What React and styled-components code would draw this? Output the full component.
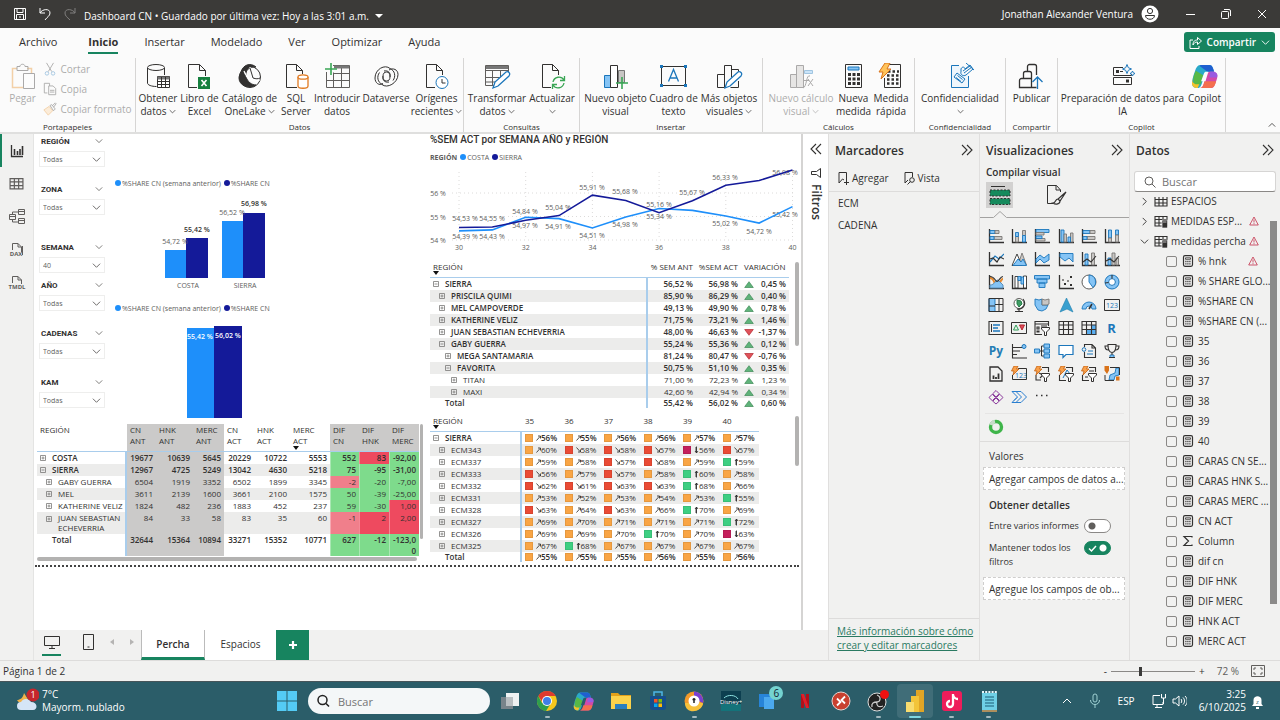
import React from 'react';
import styled, { createGlobalStyle, css } from 'styled-components';

const green = '#17845f';
const ink = '#323130';
const sky = '#1b76bb';
const pale = '#85c4f5';
const grey = '#c8c6c4';

const GlobalStyle = createGlobalStyle`
  * {
    box-sizing: border-box;
  }

  body {
    margin: 0;
    overflow: hidden;
    font-family: 'Open Sans', 'Noto Sans', sans-serif;
    font-size: 10px;
    color: ${ink};
  }

  button, input, select {
    font: inherit;
    color: inherit;
    margin: 0;
    padding: 0;
    border: 0;
    background: none;
  }

  h2, h3, p, ul {
    margin: 0;
    padding: 0;
    font-size: inherit;
    font-weight: 600;
  }

  svg {
    display: block;
    flex: none;
  }
`;

const Svg = ({ w = 16, h = w, vw = w, vh = h, s = ink, children, ...rest }) => (
  <svg width={w} height={h} viewBox={`0 0 ${vw} ${vh}`} fill="none" stroke={s} aria-hidden="true" {...rest}>
    {children}
  </svg>
);

const Chevron = ({ w = 8, dir = 'down', s = ink }) => {
  const d = {
    down: 'M1 3l4 4 4-4',
    up: 'M1 7l4-4 4 4',
    right: 'M3 1l4 4-4 4',
  };
  return (
    <Svg w={w} vw={10} vh={10} s={s}>
      <path d={d[dir]} />
    </Svg>
  );
};

const Double = ({ left }) => (
  <Svg w={12} s={ink}>
    <path d={left ? 'M6 1L1 6l5 5M11 1L6 6l5 5' : 'M1 1l5 5-5 5M6 1l5 5-5 5'} strokeWidth="1.1" />
  </Svg>
);

/* ---------- shell ---------- */

const Shell = styled.div`
  display: flex;
  flex-direction: column;
  height: 100vh;
  background: #f1f1f0;
`;

const TitleBar = styled.header`
  display: flex;
  align-items: center;
  height: 28px;
  padding: 0 12px 0 13px;
  background: #3b3a38;
  color: #fff;
`;

const TitleText = styled.span`
  display: flex;
  align-items: center;
  gap: 6px;
  margin-left: 7px;
  padding-top: 4px;
`;

const QuickTools = styled.div`
  display: flex;
  gap: 11px;
`;

const UserBox = styled.div`
  display: flex;
  align-items: center;
  gap: 8px;
  margin-left: auto;
`;

const WindowTools = styled.div`
  display: flex;
  gap: 24px;
  margin-left: 25px;
`;

const MenuBar = styled.nav`
  display: flex;
  align-items: center;
  height: 28px;
  padding: 0 5px 0 19px;
  gap: 26px;
  background: #fbfbfb;
  font-size: 11px;
`;

const MenuItem = styled.button`
  height: 24px;
  border-bottom: 2px solid ${({ $active }) => ($active ? green : 'transparent')};
  font-weight: ${({ $active }) => ($active ? 700 : 400)};

  &:first-child {
    margin-right: 5px;
  }
`;

const ShareButton = styled.button`
  display: flex;
  align-items: center;
  gap: 5px;
  height: 20px;
  margin-left: auto;
  padding: 0 5px;
  border-radius: 3px;
  background: ${green};
  color: #fff;
  font-size: 10px;
  font-weight: 600;
`;

/* ---------- ribbon ---------- */

const Ribbon = styled.div`
  display: flex;
  height: 78px;
  background: #fbfbfb;
  border-bottom: 2px solid #dfdfde;
`;

const Group = styled.section`
  display: flex;
  flex-direction: column;
  justify-content: space-between;
  width: ${({ $w }) => $w}px;
  margin-top: 2px;
  border-right: 1px solid #d6d5d4;
`;

const GroupItems = styled.div`
  display: flex;
  justify-content: center;
`;

const GroupLabel = styled.span`
  font-size: 8px;
  line-height: 11px;
  text-align: center;
`;

const Tool = styled.button`
  display: flex;
  flex-direction: column;
  align-items: center;
  width: ${({ $w }) => $w}px;
  padding-top: 5px;
  line-height: 13px;
  white-space: nowrap;
  opacity: ${({ disabled }) => (disabled ? 0.4 : 1)};

  > svg {
    margin-bottom: 2px;
  }
`;

const ToolLine = styled.span`
  display: flex;
  align-items: center;
  gap: 2px;
  min-height: 13px;
`;

const ClipList = styled.div`
  display: flex;
  flex-direction: column;
  width: 90px;
  padding-top: 1px;
`;

const ClipButton = styled.button`
  display: flex;
  align-items: center;
  gap: 4px;
  height: 20px;
  opacity: 0.4;
  white-space: nowrap;
`;

const RibbonEnd = styled.div`
  display: flex;
  flex: 1;
  align-items: flex-end;
  justify-content: flex-end;
  padding: 3px 4px;
`;

const toolIcons = {
  obtain: (
    <>
      <path d="M2.500 5v15c0 2 4 3.500 9 3.500M19.500 5v7" />
      <ellipse cx="11" cy="4.500" rx="8.500" ry="3" />
      <path d="M12.500 13.500h12v11h-12z" fill="#fff" />
      <path d="M12.500 15h12" strokeWidth="3" stroke="#777" />
      <path d="M12.500 18.500h12M12.500 21.500h12M16.500 14v10M20.500 14v10" />
    </>
  ),
  excel: (
    <>
      <path d="M11 24.500H2.500v-23h11l6 6V13M13.500 1.500v6h6" />
      <path d="M12 14h12v12H12z" fill="#16803f" stroke="none" />
      <path d="M15.500 17l5 6M20.500 17l-5 6" stroke="#fff" strokeWidth="1.600" />
    </>
  ),
  lake: (
    <>
      <circle cx="14" cy="14" r="10.500" />
      <path d="M5 9C7 2 14-1 20 4c-6-1-11 3-10 9 1 6 6 9 10 9-8 5-17 0-17-7 0-2 1-4 2-6z" fill={ink} />
      <path d="M14 4l2.500 12M8 8c2 6 8 11 16 9M10 13c3 4 7 6 12 6" strokeWidth="1.200" stroke="#fff" />
      <path d="M14 5l3 10M17 15c3 1 5 1 7 0" />
    </>
  ),
  sql: (
    <>
      <path d="M14 24.500H3.500v-23h10l6 6V11M13.500 1.500v6h6" />
      <path d="M15 14v9c0 3 10 3 10 0v-9" fill="#fff" stroke="#e07a22" strokeWidth="1.300" />
      <ellipse cx="20" cy="14" rx="5" ry="2.200" fill="#fff" stroke="#e07a22" strokeWidth="1.300" />
    </>
  ),
  enter: (
    <>
      <path d="M9 2.500h16.500v22h-23V9M2.500 17.500h23M9.500 9.500v15M17.500 4v20.500M9 10.500h16.500" stroke="#605e5c" />
      <path d="M10 4h15" stroke="#777" strokeWidth="3" />
      <path d="M7 0v12M1 6h12" stroke="#3aa655" strokeWidth="1.600" />
    </>
  ),
  dataverse: (
    <>
      <path d="M17 5.500C12 1 2 6 2 15c0 5 4 8 8 5.500" />
      <path d="M9 21.500C14 26 25 20 25 11.500c0-5-5-7-9-4.500" />
      <path d="M17 5.500c5 2 6 8 3 12M9.500 21.500c-5-2-6-8-3-12" />
      <ellipse cx="13.500" cy="13.500" rx="3.500" ry="4.500" />
      <path d="M10 13c-1 4 2 7 6 6M17 14c1-4-2-7-6-6" />
    </>
  ),
  recent: (
    <>
      <path d="M12 24.500H3.500v-23h10l6 6V12M13.500 1.500v6h6" />
      <circle cx="19" cy="19.500" r="6" stroke={sky} fill="#fff" />
      <path d="M19 16v4h3.500" />
    </>
  ),
  transform: (
    <>
      <path d="M12 22.500H1.500v-20h23V9M1.500 7.500h23M1.500 14.500h17M1.500 19h13M8.500 7.500v15M16.500 7.500v8" stroke="#605e5c" />
      <path d="M2 4.500h22" stroke="#777" strokeWidth="3" />
      <path d="M9 25l2-6L22 9c2-1 5 1 3 4L14 23z" fill="#fff" stroke={sky} strokeWidth="1.300" />
    </>
  ),
  refresh: (
    <>
      <path d="M12 24.500H3.500v-23h10l6 6V12M13.500 1.500v6h6" />
      <path d="M14 19a6 6 0 0 1 11-2M25 20a6 6 0 0 1-11 2M25.500 13v4.500H21M13.500 26v-4.500H18" stroke="#3aa655" strokeWidth="1.300" />
    </>
  ),
  visual: (
    <>
      <path d="M2.500 12.500h6v12h-6z" fill={pale} stroke={sky} />
      <path d="M16.500 7.500h6v12h-6z" fill={grey} stroke="#777" />
      <path d="M8.500 2.500h7v22h-7z" fill="#fff" />
      <path d="M20 14v12M14 20h12" stroke="#3aa655" strokeWidth="1.600" />
    </>
  ),
  text: (
    <>
      <path d="M1.500 3.500h24v19h-24z" />
      <path d="M0 2h3v3H0zM24 2h3v3h-3zM0 21h3v3H0zM24 21h3v3h-3z" fill={sky} stroke="none" />
      <path d="M8.500 18.500l5-12 5 12M10 15h7" stroke={sky} strokeWidth="1.300" />
    </>
  ),
  more: (
    <>
      <path d="M8 11.500H1.500v13h7M15.500 6.500h7v5M22.500 18v6.500h-8M8.500 24.500v-22h7v12" />
      <path d="M9 25l2-6L22 9c2-1 5 1 3 4L14 23z" fill="#fff" stroke={sky} strokeWidth="1.300" />
    </>
  ),
  calc: (
    <>
      <path d="M2.500 11.500h6v13h-6zM8.500 2.500h7v22h-7z" fill={grey} />
      <path d="M16.500 7.500h8v3h-8z" fill={pale} stroke={sky} />
      <path d="M22 13c-4-2-3 11-7 12M15 17.500h6M20 16l5 7M25 16l-5 7" />
    </>
  ),
  measure: (
    <>
      <path d="M5.500 1.500h16v23h-16z" />
      <path d="M8 4h11v3H8z" fill={pale} stroke={sky} />
      <path d="M8 11.500h12M8 16h12M8 20.500h12" strokeWidth="3" strokeDasharray="3 1.500" />
    </>
  ),
  quick: (
    <>
      <path d="M11 1.500h11.500v23h-16V15" />
      <path d="M10 8.500h11M9 12.500h12M9 16.500h12M9 20.500h12" strokeWidth="2.500" strokeDasharray="2.500 2" />
      <path d="M7 0h5L9 6h4L3 16l2-7H1z" fill="#ffc35a" stroke="#d9731a" />
    </>
  ),
  label: (
    <>
      <path d="M12 2.500H4.500v22h17V13" stroke={sky} fill="#eef6fc" />
      <path d="M10 10l8 6-3 4-8-6zM10.500 12.500l5 4M9 14.500l5 4" stroke={sky} />
      <path d="M14 6c1-3 4-2 4 0l5-4 3 4-7 6c-3 2-6-1-5-3zM16 8l7-5M17 10l8-6" stroke={sky} />
      <path d="M19 0l8 7" stroke={sky} />
    </>
  ),
  publish: (
    <>
      <path d="M9.500 8V3.500a2 2 0 0 1 2-2h5a2 2 0 0 1 2 2V12M5.500 15V10.500a2 2 0 0 1 2-2h4a2 2 0 0 1 2 2v14M13.500 24.500h-12v-7a2 2 0 0 1 2-2h10M13.500 24.500h5" strokeWidth="1.300" />
      <path d="M19.500 26V14M14.500 19l5-5 5 5" stroke={sky} strokeWidth="1.300" />
    </>
  ),
  prepare: (
    <>
      <path d="M14 4.500H4.500v8h18V11M4.500 14.500h18v7h-18zM14 8.500h-3" />
      <path d="M7 7h3v3H7zM17 16.500h3v3h-3z" fill={ink} stroke="none" />
      <path d="M18 1.500l1.300 3.200 3.200 1.300-3.200 1.300L18 10.500l-1.300-3.200L13.500 6l3.200-1.300zM23.500 8l.8 1.700 1.700.8-1.700.8-.8 1.700-.8-1.700-1.700-.8 1.700-.8z" stroke={sky} />
    </>
  ),
};

const CopilotArt = ({ w = 27, hole = '#fbfbfb' }) => (
  <Svg w={w} vw={28} vh={28} s="none">
    <path d="M10 2h9c2 0 3 1 4 4l1 3h-5c-3 0-4 1-5 4l-3 9c-1 3-2 4-5 4 0 0-5 0-5-5 0-4 3-12 4-15 1-2 2-4 5-4z" fill="#2aa9c9" />
    <path d="M10 2h9c2 0 3 1 4 4l1 3h-7L9 3z" fill="#1f5fd0" />
    <path d="M3 12c-2 5-2 9 1 9h5l-2 5c-4 0-6-2-6-5 0-3 1-6 2-9z" fill="#f3c22b" />
    <path d="M3 13l2-5 8 5-3 9H5c-3 0-3-5-2-9z" fill="#57b947" />
    <path d="M24 9c3 1 4 3 3 7-1 3-2 6-3 8-1 2-3 2-5 2H9c2 0 3-1 4-4l3-10c1-2 2-3 4-3z" fill="#d34aa8" />
    <path d="M14 19h12c-1 5-3 7-6 7H9c3 0 4-3 5-7z" fill="#f46f4e" />
    <path d="M20 9h4c3 1 4 3 3 6h-8z" fill="#9a5ae0" />
    <path d="M15 9h3l-3 10h-4.500l2.500-7c.4-1.500 1-2.500 2-3z" fill={hole} />
  </Svg>
);

const RibbonTool = ({ icon, lines, w, arrow, disabled }) => (
  <Tool $w={w} disabled={disabled}>
    {icon === 'copilot' ? <CopilotArt /> : <Svg w={27}>{toolIcons[icon]}</Svg>}
    {lines.map((line, i) => (
      <ToolLine key={line}>
        {line}
        {arrow && i === lines.length - 1 && <Chevron w={7} />}
      </ToolLine>
    ))}
  </Tool>
);

const groups = [
  {
    label: 'Datos',
    w: 328,
    tools: [
      { icon: 'obtain', lines: ['Obtener', 'datos'], w: 42, arrow: true },
      { icon: 'excel', lines: ['Libro de', 'Excel'], w: 41 },
      { icon: 'lake', lines: ['Catálogo de', 'OneLake'], w: 59, arrow: true },
      { icon: 'sql', lines: ['SQL', 'Server'], w: 34 },
      { icon: 'enter', lines: ['Introducir', 'datos'], w: 48 },
      { icon: 'dataverse', lines: ['Dataverse'], w: 50 },
      { icon: 'recent', lines: ['Orígenes', 'recientes'], w: 51, arrow: true },
    ],
  },
  {
    label: 'Consultas',
    w: 116,
    tools: [
      { icon: 'transform', lines: ['Transformar', 'datos'], w: 61, arrow: true },
      { icon: 'refresh', lines: ['Actualizar', ''], w: 49, arrow: true },
    ],
  },
  {
    label: 'Insertar',
    w: 183,
    tools: [
      { icon: 'visual', lines: ['Nuevo objeto', 'visual'], w: 65 },
      { icon: 'text', lines: ['Cuadro de', 'texto'], w: 51 },
      { icon: 'more', lines: ['Más objetos', 'visuales'], w: 60, arrow: true },
    ],
  },
  {
    label: 'Cálculos',
    w: 152,
    tools: [
      { icon: 'calc', lines: ['Nuevo cálculo', 'visual'], w: 68, arrow: true, disabled: true },
      { icon: 'measure', lines: ['Nueva', 'medida'], w: 37 },
      { icon: 'quick', lines: ['Medida', 'rápida'], w: 38 },
    ],
  },
  {
    label: 'Confidencialidad',
    w: 91,
    tools: [{ icon: 'label', lines: ['Confidencialidad', ''], w: 80, arrow: true }],
  },
  { label: 'Compartir', w: 52, tools: [{ icon: 'publish', lines: ['Publicar'], w: 40 }] },
  {
    label: 'Copilot',
    w: 168,
    tools: [
      { icon: 'prepare', lines: ['Preparación de datos para', 'IA'], w: 126 },
      { icon: 'copilot', lines: ['Copilot'], w: 38 },
    ],
  },
];

const RibbonBar = () => (
  <Ribbon>
    <Group $w={136}>
      <GroupItems>
        <Tool $w={40} disabled>
          <Svg w={27}>
            <path d="M14 24.500H3.500v-19H8M18 5.500h4.500V10" stroke="#e8912c" strokeWidth="1.500" />
            <path d="M8 3.500h3c0-3 5-3 5 0h3v4H8z" />
            <path d="M14.500 10.500h11v15h-11z" fill="#fff" />
          </Svg>
          Pegar
        </Tool>
        <ClipList>
          <ClipButton>
            <Svg w={14} vw={16} vh={16}>
              <path d="M4 1l6 10M12 1L6 11" />
              <circle cx="4.500" cy="13" r="2" stroke={sky} />
              <circle cx="11.500" cy="13" r="2" stroke={sky} />
            </Svg>
            Cortar
          </ClipButton>
          <ClipButton>
            <Svg w={14} vw={16} vh={16}>
              <path d="M5 12.500H1.500v-11h6v3M6.500 4.500h5l3 3v7h-8zM8 9.500h5M8 11.500h5" />
            </Svg>
            Copia
          </ClipButton>
          <ClipButton>
            <Svg w={14} vw={16} vh={16}>
              <path d="M1 9l6-4 4 5-5 5z" fill="#fbd7a8" stroke="#e8912c" />
              <path d="M8 4l2-1 4 5-2 2zM11 4l3-3 1 1-3 4" />
            </Svg>
            Copiar formato
          </ClipButton>
        </ClipList>
      </GroupItems>
      <GroupLabel>Portapapeles</GroupLabel>
    </Group>
    {groups.map((group) => (
      <Group key={group.label} $w={group.w}>
        <GroupItems>
          {group.tools.map((tool) => (
            <RibbonTool key={tool.icon} {...tool} />
          ))}
        </GroupItems>
        <GroupLabel>{group.label}</GroupLabel>
      </Group>
    ))}
    <RibbonEnd>
      <Chevron dir="up" w={8} />
    </RibbonEnd>
  </Ribbon>
);

/* ---------- report ---------- */

const Workspace = styled.main`
  display: flex;
  flex: 1;
  min-height: 0;
`;

const Rail = styled.nav`
  display: flex;
  flex-direction: column;
  width: 34px;
  border-right: 1px solid #e4e4e3;
`;

const RailButton = styled.button`
  display: flex;
  align-items: center;
  justify-content: center;
  height: 33px;
  padding-right: 2px;
  border-left: 2px solid ${({ $active }) => ($active ? green : 'transparent')};
`;

const ReportArea = styled.div`
  display: flex;
  flex-direction: column;
  flex: 1;
  min-width: 0;
`;

const CanvasRow = styled.div`
  display: flex;
  flex: 1;
  min-height: 0;
  background: #fff;
`;

const Canvas = styled.div`
  flex: 1;
  overflow: hidden;
`;

const ReportPage = styled.div`
  display: flex;
  gap: 6px;
  padding: 0 1px 3px 2px;
  margin: 0 2px 0 1px;
  border-bottom: 2px dotted #444;
`;

const LeftSide = styled.div`
  flex: none;
  width: 387px;
`;

const RightSide = styled.div`
  flex: 1;
`;

const UpperLeft = styled.div`
  display: grid;
  grid-template-columns: 68px 1fr;
  gap: 8px;
  height: 290px;
`;

const Slicers = styled.div`
  padding: 1px 0 0 2px;
`;

const Slicer = styled.label`
  display: block;
  margin-bottom: ${({ $gap }) => $gap}px;
`;

const SlicerTitle = styled.span`
  display: flex;
  align-items: center;
  justify-content: space-between;
  height: 12px;
  padding: 0 2px;
  font-family: Roboto, sans-serif;
  font-size: 8px;
  font-weight: 700;
`;

const SlicerField = styled.span`
  display: grid;
  align-items: center;
  height: 16px;
  margin-top: 4px;
  border: 1px solid #eeeeed;

  select {
    grid-area: 1 / 1;
    width: 100%;
    padding-left: 3px;
    appearance: none;
    font-size: 7px;
    color: #605e5c;
  }

  svg {
    grid-area: 1 / 1;
    justify-self: end;
    margin-right: 3px;
    pointer-events: none;
  }
`;

const Legend = styled.div`
  display: flex;
  align-items: center;
  gap: 1px;
  height: 12px;
  font-size: 7px;
  color: #605e5c;
  white-space: nowrap;
`;

const Dot = styled.i`
  width: 6px;
  height: 6px;
  margin-left: 2px;
  border-radius: 50%;
  background: ${({ $color }) => $color};
`;

const ChartBlock = styled.div`
  padding-top: ${({ $top }) => $top}px;
`;

const ChartTitle = styled.h3`
  height: 17px;
  font-family: Roboto, sans-serif;
  font-size: 10px;
  font-weight: 500;
  line-height: 11px;
`;

const costaBlue = '#1e8ffa';
const sierraBlue = '#141a99';

const slicers = [
  ['REGIÓN', 'Todas', 16],
  ['ZONA', 'Todas', 26],
  ['SEMANA', '40', 6],
  ['AÑO', 'Todas', 16],
  ['CADENAS', 'Todas', 17],
  ['KAM', 'Todas', 0],
];

const ShareLegend = () => (
  <Legend>
    <Dot $color={costaBlue} />
    %SHARE CN (semana anterior)
    <Dot $color={sierraBlue} />
    %SHARE CN
  </Legend>
);

const RegionBars = () => (
  <svg width="311" height="100" viewBox="0 0 311 100" fontSize="7" textAnchor="middle" fill="#605e5c">
    <rect x="52" y="57" width="22" height="28" fill={costaBlue} />
    <rect x="73" y="45" width="22" height="40" fill={sierraBlue} />
    <rect x="109" y="28" width="22" height="57" fill={costaBlue} />
    <rect x="130" y="20" width="22" height="65" fill={sierraBlue} />
    <text x="62" y="51">54,72 %</text>
    <text x="84" y="39" fill={ink} fontWeight="600">55,42 %</text>
    <text x="119" y="22">56,52 %</text>
    <text x="141" y="13" fill={ink} fontWeight="600">56,98 %</text>
    <text x="75" y="95">COSTA</text>
    <text x="132" y="95">SIERRA</text>
  </svg>
);

const TotalBars = () => (
  <svg width="311" height="94" viewBox="0 0 311 94" fontSize="7" fontWeight="600" textAnchor="middle">
    <rect x="74" y="4" width="27" height="90" fill={costaBlue} />
    <rect x="101" y="2" width="28" height="92" fill={sierraBlue} />
    <text x="87" y="15" fill="#fff">55,42 %</text>
    <text x="115" y="14" fill="#fff">56,02 %</text>
  </svg>
);

const costaSeries = [54.39, 54.43, 54.97, 54.91, 54.51, 54.98, 55.34, 55.26, 55.02, 54.72, 55.42];
const sierraSeries = [54.53, 54.55, 54.84, 55.04, 55.91, 55.68, 55.16, 55.67, 56.33, 56.53, 56.98];
const weekX = (i) => 29 + i * 33.35;
const shareY = (v) => 30 - (v - 56) * 23.5;
const linePoints = (series) => series.map((v, i) => `${weekX(i)},${shareY(v)}`).join(' ');

const lineLabels = [
  [35, 58, '54,53 %'],
  [62, 58, '54,55 %'],
  [95, 51, '54,84 %'],
  [128, 47, '55,04 %'],
  [162, 27, '55,91 %'],
  [195, 31, '55,68 %'],
  [229, 44, '55,16 %'],
  [262, 32, '55,67 %'],
  [295, 17, '56,33 %'],
  [355, 12, '56,98 %'],
  [35, 76, '54,39 %'],
  [62, 76, '54,43 %'],
  [95, 65, '54,97 %'],
  [128, 66, '54,91 %'],
  [162, 75, '54,51 %'],
  [195, 64, '54,98 %'],
  [229, 56, '55,34 %'],
  [295, 63, '55,02 %'],
  [329, 71, '54,72 %'],
  [355, 54, '55,42 %'],
];

const WeekLines = () => (
  <svg width="370" height="90" viewBox="0 0 370 90" fontSize="7" textAnchor="middle" fill="#605e5c">
    {[56, 55, 54].map((v) => (
      <g key={v}>
        <path d={`M22 ${shareY(v)}h342`} stroke="#dcdbda" strokeDasharray="1 3" />
        <text x="8" y={shareY(v) + 3}>{v} %</text>
      </g>
    ))}
    {[0, 2, 4, 6, 8, 10].map((i) => (
      <g key={i}>
        <path d={`M${weekX(i)} 9v68`} stroke="#dcdbda" strokeDasharray="1 3" />
        <text x={weekX(i)} y="87">{30 + i}</text>
      </g>
    ))}
    {lineLabels.map(([x, y, label]) => (
      <text key={label} x={x} y={y}>{label}</text>
    ))}
    <polyline points={linePoints(costaSeries)} fill="none" stroke={costaBlue} strokeWidth="1.600" />
    <polyline points={linePoints(sierraSeries)} fill="none" stroke={sierraBlue} strokeWidth="1.600" />
  </svg>
);

/* ---------- matrices ---------- */

const Matrix = styled.table`
  width: ${({ $w }) => $w}px;
  table-layout: fixed;
  border-spacing: 0;
  font-size: 8px;
  line-height: 12px;

  th, td {
    height: 12px;
    padding: 0;
    white-space: nowrap;
  }

  thead th {
    height: ${({ $head }) => $head}px;
    font-weight: 400;
    line-height: ${({ $headLine = 9 }) => $headLine}px;
    text-align: left;
    vertical-align: top;
    border-bottom: 1px solid #a9cdec;
  }

  tbody th, tfoot th {
    font-weight: inherit;
    text-align: left;
    border-right: 2px solid #a9cdec;
  }

  tbody tr:nth-child(even) {
    background: #ececeb;
  }

  tfoot tr {
    font-weight: 600;
    line-height: ${({ $foot }) => $foot}px;
  }

  tfoot th, tfoot td {
    height: ${({ $foot }) => $foot}px;
  }
`;

const Row = styled.tr`
  font-weight: ${({ $bold }) => ($bold ? 600 : 400)};
`;

const Num = styled.td`
  text-align: right;
`;

const Head = styled.th`
  && {
    padding-left: ${({ $pad = 0 }) => $pad}px;
    text-align: ${({ $right }) => ($right ? 'right' : 'left')};
    background: ${({ $bg }) => $bg || 'none'};
  }
`;

const RowName = styled.span`
  display: flex;
  gap: 6px;
  padding-left: ${({ $level }) => 3 + $level * 6}px;
  line-height: inherit;

  svg {
    margin-top: 3px;
  }
`;

const TotalName = styled.span`
  padding-left: 15px;
`;

const SortMark = () => (
  <Svg w={6} h={4} s="none">
    <path d="M0 0h6L3 4z" fill="#111" />
  </Svg>
);

const Toggle = ({ open }) => (
  <Svg w={6} s="#7a7877">
    <path d={open ? 'M.5.5h5v5h-5zM1.500 3h3' : 'M.5.5h5v5h-5zM1.500 3h3M3 1.500v3'} strokeWidth=".8" />
  </Svg>
);

const MatrixScroll = styled.div`
  display: flex;
  justify-content: space-between;
  padding-right: ${({ $right = 1 }) => $right}px;
  margin-top: ${({ $top }) => $top}px;
`;

const Thumb = styled.div`
  width: ${({ $w = 4 }) => $w}px;
  height: ${({ $h }) => $h}px;
  border-radius: 2px;
  background: #b3b2b1;
`;

const Trend = ({ up }) => (
  <Svg w={10} h={7} s={up ? '#3d8a56' : '#b3262e'}>
    <path d={up ? 'M5 .7L9.300 6.500H.7z' : 'M.7.5h8.600L5 6.300z'} fill={up ? '#5fb37a' : '#e0525a'} strokeWidth=".7" />
  </Svg>
);

const variation = [
  ['SIERRA', 0, true, true, '56,52 %', '56,98 %', '0,45 %'],
  ['PRISCILA QUIMI', 1, false, true, '85,90 %', '86,29 %', '0,40 %'],
  ['MEL CAMPOVERDE', 1, false, true, '49,13 %', '49,90 %', '0,78 %'],
  ['KATHERINE VELIZ', 1, false, true, '71,75 %', '73,21 %', '1,46 %'],
  ['JUAN SEBASTIAN ECHEVERRIA', 1, false, true, '48,00 %', '46,63 %', '-1,37 %'],
  ['GABY GUERRA', 1, true, true, '55,24 %', '55,36 %', '0,12 %'],
  ['MEGA SANTAMARIA', 2, false, true, '81,24 %', '80,47 %', '-0,76 %'],
  ['FAVORITA', 2, true, true, '50,75 %', '51,10 %', '0,35 %'],
  ['TITAN', 3, false, false, '71,00 %', '72,23 %', '1,23 %'],
  ['MAXI', 3, false, false, '42,60 %', '42,94 %', '0,34 %'],
];

const TrendCell = styled.td`
  svg {
    margin: 0 0 0 6px;
  }
`;

const LastNum = styled(Num)`
  && {
    padding-right: 3px;
  }
`;

const VariationMatrix = () => (
  <Matrix $w={359} $head={16} $foot={10}>
    <colgroup>
      <col style={{ width: 218 }} />
      <col style={{ width: 45 }} />
      <col style={{ width: 45 }} />
      <col style={{ width: 18 }} />
      <col />
    </colgroup>
    <thead>
      <tr>
        <Head $pad={3}>REGIÓN<SortMark /></Head>
        <Head $right>% SEM ANT</Head>
        <Head $right>%SEM ACT</Head>
        <Head $pad={6} colSpan={2}>VARIACIÓN</Head>
      </tr>
    </thead>
    <tbody>
      {variation.map(([name, level, open, bold, before, now, diff]) => (
        <Row key={name} $bold={bold}>
          <th scope="row"><RowName $level={level}><Toggle open={open} />{name}</RowName></th>
          <Num>{before}</Num>
          <Num>{now}</Num>
          <TrendCell><Trend up={!diff.startsWith('-')} /></TrendCell>
          <LastNum>{diff}</LastNum>
        </Row>
      ))}
    </tbody>
    <tfoot>
      <tr>
        <th scope="row"><TotalName>Total</TotalName></th>
        <Num>55,42 %</Num>
        <Num>56,02 %</Num>
        <TrendCell><Trend up /></TrendCell>
        <LastNum>0,60 %</LastNum>
      </tr>
    </tfoot>
  </Matrix>
);

// marks: a = rising, b = falling, c = top, d = bottom
const marks = {
  a: ['#f9a545', 'M.5 6.500l3.500-4M2 2h2.500v2.500'],
  b: ['#ea4b35', 'M.5 1.500l3.500 4M2 6h2.500V3.500'],
  c: ['#3ecf82', 'M2.500 7.500V1M1 3l1.500-2L4 3M2 2v5'],
  d: ['#c4205c', 'M2.500.5V7M1 5l1.500 2L4 5M2 1v5'],
};

const weekRows = [
  ['SIERRA', ['a56', 'a55', 'a56', 'a56', 'a57', 'a57']],
  ['ECM343', ['a60', 'b58', 'b58', 'b57', 'd56', 'b57']],
  ['ECM337', ['a59', 'a58', 'b57', 'b58', 'a59', 'c59']],
  ['ECM333', ['b56', 'a57', 'b57', 'a58', 'c60', 'a58']],
  ['ECM332', ['b62', 'b61', 'b63', 'b63', 'c68', 'a66']],
  ['ECM331', ['a53', 'a52', 'a53', 'a54', 'a53', 'c55']],
  ['ECM328', ['b63', 'a64', 'b63', 'a66', 'c70', 'a69']],
  ['ECM327', ['a69', 'a70', 'a71', 'a71', 'a71', 'c72']],
  ['ECM326', ['a69', 'a69', 'a70', 'c70', 'a70', 'd63']],
  ['ECM325', ['a67', 'c68', 'a67', 'a67', 'a67', 'a67']],
];
const weekTotals = ['a55', 'a55', 'a55', 'a56', 'a55', 'a56'];

const MarkBox = styled.span`
  display: flex;
  align-items: center;
  padding-left: 3px;

  i {
    width: 8px;
    height: 8px;
    margin-right: 3px;
    background: ${({ $color }) => $color};
    border: 1px solid rgba(0, 0, 0, 0.08);
  }
`;

const MarkCell = ({ value }) => {
  const [color, d] = marks[value[0]];
  return (
    <td>
      <MarkBox $color={color}>
        <i />
        <Svg w={5} h={8} s="#222"><path d={d} strokeWidth=".8" /></Svg>
        {value.slice(1)}%
      </MarkBox>
    </td>
  );
};

const WeekMatrix = () => (
  <Matrix $w={329} $head={16} $foot={10}>
    <colgroup>
      <col style={{ width: 92 }} />
    </colgroup>
    <thead>
      <tr>
        <Head $pad={3}>REGIÓN<SortMark /></Head>
        {[35, 36, 37, 38, 39, 40].map((week) => (
          <Head key={week} $pad={3}>{week}</Head>
        ))}
      </tr>
    </thead>
    <tbody>
      {weekRows.map(([name, values], r) => (
        <Row key={name} $bold={r === 0}>
          <th scope="row"><RowName $level={r ? 1 : 0}><Toggle open={r === 0} />{name}</RowName></th>
          {values.map((value, i) => <MarkCell key={i} value={value} />)}
        </Row>
      ))}
    </tbody>
    <tfoot>
      <tr>
        <th scope="row"><TotalName>Total</TotalName></th>
        {weekTotals.map((value, i) => <MarkCell key={i} value={value} />)}
      </tr>
    </tfoot>
  </Matrix>
);

const tones = { g: '#7edb8c', r: '#ee4a5f', p: '#f07f8b', s: '#cbcac9' };

const Cell = styled(Num)`
  && {
    padding-right: 3px;
    vertical-align: top;
    white-space: normal;
    word-break: break-all;
    background: ${({ $tone }) => tones[$tone] || 'none'};
    border-left: ${({ $tone }) => ($tone && $tone !== 's' ? '1px solid rgba(255, 255, 255, 0.35)' : 0)};
  }
`;

const ShelfMatrixTable = styled(Matrix)`
  tbody th {
    vertical-align: top;
  }

  tbody tr:last-child {
    line-height: 10px;

    td, th {
      height: 22px;
      padding-top: 1px;
    }
  }

  tfoot th {
    vertical-align: top;
  }
`;

const shelfHeads = [
  ['CN', 'ANT', 29],
  ['HNK', 'ANT', 37],
  ['MERC', 'ANT', 31],
  ['CN', 'ACT', 30],
  ['HNK', 'ACT', 36],
  ['MERC', 'ACT', 40],
  ['DIF', 'CN', 29],
  ['DIF', 'HNK', 30],
  ['DIF', 'MERC', 30],
];

const shelfRows = [
  [['COSTA'], 0, false, ['19677', '10639', '5645', '20229', '10722', '5553', '552', '83', '-92,00'], 'grg'],
  [['SIERRA'], 0, true, ['12967', '4725', '5249', '13042', '4630', '5218', '75', '-95', '-31,00'], 'ggg'],
  [['GABY GUERRA'], 1, false, ['6504', '1919', '3352', '6502', '1899', '3345', '-2', '-20', '-7,00'], 'pgg'],
  [['MEL'], 1, false, ['3611', '2139', '1600', '3661', '2100', '1575', '50', '-39', '-25,00'], 'ggg'],
  [['KATHERINE VELIZ'], 1, false, ['1824', '482', '236', '1883', '452', '237', '59', '-30', '1,00'], 'ggr'],
  [['JUAN SEBASTIAN', 'ECHEVERRIA'], 1, false, ['84', '33', '58', '83', '35', '60', '-1', '2', '2,00'], 'prr'],
];
const shelfTotals = ['32644', '15364', '10894', '33271', '15352', '10771', '627', '-12', '-123,00'];
const toneAt = (i, diff) => (i < 3 ? 's' : i > 5 ? diff[i - 6] : '');

const NameLines = styled.span`
  display: flex;
  flex-direction: column;
`;

const ShelfMatrix = () => (
  <ShelfMatrixTable $w={382} $head={28} $headLine={11} $foot={11}>
    <colgroup>
      <col style={{ width: 90 }} />
      {shelfHeads.map(([a, b, w]) => <col key={a + b} style={{ width: w }} />)}
    </colgroup>
    <thead>
      <tr>
        <Head $pad={3}>REGIÓN</Head>
        {shelfHeads.map(([a, b], i) => (
          <Head key={a + b} $pad={3} $bg={i < 3 || i > 5 ? tones.s : ''}>
            {a}<br />{b}
            {i === 5 && <SortMark />}
          </Head>
        ))}
      </tr>
    </thead>
    <tbody>
      {shelfRows.map(([name, level, open, values, diff], r) => (
        <Row key={name[0]} $bold={r < 2}>
          <th scope="row">
            <RowName $level={level}>
              <Toggle open={open} />
              <NameLines>{name.map((line) => <span key={line}>{line}</span>)}</NameLines>
            </RowName>
          </th>
          {values.map((value, i) => <Cell key={i} $tone={toneAt(i, diff)}>{value}</Cell>)}
        </Row>
      ))}
    </tbody>
    <tfoot>
      <tr>
        <th scope="row"><TotalName>Total</TotalName></th>
        {shelfTotals.map((value, i) => <Cell key={i} $tone={toneAt(i, 'ggg')}>{value}</Cell>)}
      </tr>
    </tfoot>
  </ShelfMatrixTable>
);

const HorizontalThumb = styled.div`
  height: 4px;
  margin: 1px 7px 0 0;
  border-radius: 2px;
  background: #b3b2b1;
`;

const Report = () => (
  <ReportPage>
    <LeftSide>
      <UpperLeft>
        <Slicers>
          {slicers.map(([name, value, gap]) => (
            <Slicer key={name} $gap={gap}>
              <SlicerTitle>{name}<Chevron w={8} s="#605e5c" /></SlicerTitle>
              <SlicerField>
                <select defaultValue={value}><option>{value}</option></select>
                <Chevron w={9} s="#605e5c" />
              </SlicerField>
            </Slicer>
          ))}
        </Slicers>
        <div>
          <ChartBlock $top={43}><ShareLegend /></ChartBlock>
          <ChartBlock $top={4}><RegionBars /></ChartBlock>
          <ChartBlock $top={9}><ShareLegend /></ChartBlock>
          <ChartBlock $top={10}><TotalBars /></ChartBlock>
        </div>
      </UpperLeft>
      <MatrixScroll $top={0}>
        <ShelfMatrix />
        <Thumb $w={3} $h={115} />
      </MatrixScroll>
      <HorizontalThumb />
    </LeftSide>
    <RightSide>
      <ChartTitle>%SEM ACT por SEMANA AÑO y REGIÓN</ChartTitle>
      <Legend>
        <b>REGIÓN</b>
        <Dot $color={costaBlue} />
        COSTA
        <Dot $color={sierraBlue} />
        SIERRA
      </Legend>
      <WeekLines />
      <MatrixScroll $top={9}>
        <VariationMatrix />
        <Thumb $h={84} />
      </MatrixScroll>
      <MatrixScroll $top={8}>
        <WeekMatrix />
        <Thumb $h={50} />
      </MatrixScroll>
    </RightSide>
  </ReportPage>
);

const FilterStrip = styled.aside`
  display: flex;
  flex-direction: column;
  align-items: center;
  gap: 12px;
  width: 27px;
  padding-top: 9px;
  border-left: 2px solid #d5d4d3;
`;

const VerticalLabel = styled.h2`
  margin-top: -7px;
  font-size: 12px;
  line-height: 16px;
  writing-mode: vertical-rl;
`;

const PageTabs = styled.div`
  display: flex;
  height: 30px;
`;

const ViewButton = styled.button`
  display: flex;
  align-items: center;
  justify-content: center;
  width: 19px;
  height: 26px;
  margin-left: ${({ $left }) => $left}px;
  border-bottom: 2px solid ${({ $active }) => ($active ? green : 'transparent')};
`;

const PageTab = styled.button`
  width: ${({ $w }) => $w}px;
  background: #fff;
  border-bottom: 3px solid ${({ $active }) => ($active ? green : '#fff')};
  border-right: 1px solid ${({ $active }) => ($active ? '#bbb' : '#fff')};
  border-left: 1px solid ${({ $active }) => ($active ? '#bbb' : '#fff')};
  font-weight: ${({ $active }) => ($active ? 600 : 400)};
`;

const AddPage = styled.button`
  width: 33px;
  background: ${green};

  svg {
    margin: 0 auto;
  }
`;

/* ---------- side panels ---------- */

const Panel = styled.aside`
  display: flex;
  flex-direction: column;
  width: ${({ $w }) => $w}px;
  border-left: 1px solid #e0dfde;
`;

const PanelHead = styled.div`
  display: flex;
  align-items: center;
  justify-content: space-between;
  height: 32px;
  padding: 0 6px;

  h2 {
    font-size: 12px;
  }
`;

const MarkTools = styled.div`
  display: flex;
  gap: 14px;
  height: 26px;
  padding-left: 8px;
  border-bottom: 1px solid #dddcdb;
`;

const IconText = styled.button`
  display: flex;
  align-items: center;
  gap: 3px;
  height: 24px;
`;

const MarkList = styled.ul`
  flex: 1;
  list-style: none;

  li {
    height: 22px;
    padding-left: 9px;
    font-weight: 400;
    line-height: 22px;
  }
`;

const MarkFoot = styled.div`
  height: 42px;
  padding: 5px 0 5px 8px;
  border-top: 1px solid #dddcdb;
  line-height: 14px;

  a {
    color: #2a7a62;
  }
`;

const BuildTitle = styled.h3`
  padding-left: 6px;
  line-height: 12px;
`;

const BuildTabs = styled.div`
  display: flex;
  gap: 29px;
  height: 31px;
  padding: 4px 6px 0;
`;

const BuildTab = styled.button`
  display: flex;
  align-items: center;
  justify-content: center;
  width: 27px;
  height: 26px;
  background: ${({ $active }) => ($active ? '#d2d1d0' : 'none')};
`;

const Notch = styled.div`
  display: flex;
  height: 9px;

  &::before, &::after {
    content: '';
    width: 12px;
    border-bottom: 1px solid #a3a2a1;
  }

  &::after {
    flex: 1;
  }
`;

const VisualGrid = styled.div`
  display: grid;
  grid-template-columns: repeat(6, 16px);
  justify-content: space-between;
  row-gap: 7px;
  padding: 10px 9px 8px 8px;
`;

const ExtraVisuals = styled.div`
  height: 28px;
  margin: 0 5px;
  padding: 5px 3px;
  border-top: 1px solid #e6e5e4;
`;

const Wells = styled.div`
  display: flex;
  flex-direction: column;
  padding: 7px 4px 0 3px;
  border-top: 1px solid #dddcdb;
`;

const WellLabel = styled.h3`
  padding-left: 6px;
  margin-bottom: ${({ $gap }) => $gap}px;
  line-height: 15px;
  font-weight: ${({ $bold }) => ($bold ? 600 : 400)};
`;

const Well = styled.button`
  height: 23px;
  padding-left: 5px;
  margin-bottom: 8px;
  background: #fff;
  border: 1px dashed #cfcecd;
  text-align: left;
  white-space: nowrap;
`;

const SwitchRow = styled.label`
  display: flex;
  align-items: flex-start;
  justify-content: space-between;
  min-height: 22px;
  padding: 0 14px 0 6px;
  margin-bottom: ${({ $wrap }) => ($wrap ? 8 : 0)}px;
  font-size: 9px;
  line-height: 14px;

  > span {
    width: 94px;
    white-space: ${({ $wrap }) => ($wrap ? 'normal' : 'nowrap')};
  }
`;

const Switch = styled.input`
  appearance: none;
  width: 27px;
  height: 14px;
  flex: none;
  border: 1px solid #8a8886;
  border-radius: 7px;
  background: radial-gradient(circle at 7px 6px, #605e5c 3px, #fff 4px);

  &:checked {
    border-color: ${green};
    background: radial-gradient(circle at 18px 6px, #fff 3px, ${green} 4px);
  }
`;

const SwitchTrack = styled.div`
  display: grid;
  align-items: center;

  > * {
    grid-area: 1 / 1;
  }

  svg {
    margin-left: 4px;
    pointer-events: none;
  }
`;

const SearchField = styled.label`
  display: flex;
  align-items: center;
  gap: 6px;
  height: 21px;
  margin: 5px 4px;
  padding-left: 9px;
  background: #fff;
  border: 1px solid #d6d5d4;
  border-bottom-color: #8a8886;
  border-radius: 3px;

  input {
    width: 90px;
    outline: 0;
    font-size: 11px;
  }
`;

const FieldArea = styled.div`
  display: flex;
  flex: 1;
  min-height: 0;
  overflow: hidden;
`;

const FieldTree = styled.div`
  flex: 1;
  min-width: 0;
`;

const treeRow = css`
  display: flex;
  align-items: center;
  height: 20px;
  white-space: nowrap;
`;

const Branch = styled.div`
  ${treeRow}
  gap: 3px;
  padding-left: 10px;

  > span {
    width: ${({ $short }) => ($short ? 'auto' : '75px')};
  }

  > svg:first-child {
    margin-right: 2px;
  }
`;

const Cropped = styled.div`
  display: flex;
  align-items: flex-end;
  height: 14px;
  overflow: hidden;
`;

const Field = styled.label`
  ${treeRow}
  gap: 4px;
  padding-left: 36px;

  input {
    appearance: none;
    width: 11px;
    height: 11px;
    margin-right: 1px;
    border: 1px solid #8a8886;
    border-radius: 2px;
  }

  span {
    min-width: 46px;
  }
`;

const TreeThumb = styled.div`
  width: 7px;
  height: 383px;
  margin: 24px 3px 0 0;
  background: #8b8a89;
`;

const axis = <path d="M1.500 1v13.500H16" strokeWidth="1.300" />;
const B = ({ d }) => <path d={d} fill={pale} stroke={sky} strokeWidth=".9" />;
const G = ({ d }) => <path d={d} fill={grey} stroke="#797775" strokeWidth=".9" />;
const K = ({ d, w = 1.1 }) => <path d={d} strokeWidth={w} />;
const Bolt = () => <path d="M3 0h4L5.500 3H8L2 9l1-4H.5z" fill="#f9a04a" stroke="#c4610f" strokeWidth=".8" />;
const Funnel = () => <path d="M7.500 7.500h8v1.500l-3 3v3.500h-2V12l-3-3z" fill="#fff" stroke={ink} />;

const visuals = [
  ['Barras apiladas', <>{axis}<B d="M2 2.500h5v3H2z" /><G d="M7 2.500h4v3H7zM6 8.500h8v3H6z" /><B d="M2 8.500h4v3H2z" /></>],
  ['Columnas apiladas', <>{axis}<G d="M4.500 8.500h3V14h-3zM11.500 2.500h3v5h-3z" /><B d="M4.500 4.500h3v4h-3zM11.500 7.500h3V14h-3z" /></>],
  ['Barras agrupadas', <>{axis}<B d="M2 1.500h13v3H2z" /><G d="M2 4.500h8v2.500H2zM2 10.500h9v2.500H2z" /><B d="M2 8h6v2.500H2z" /></>],
  ['Columnas agrupadas', <>{axis}<B d="M3 2h3v12H3z" /><G d="M6 6h2.500v8H6zM12.500 5H15v9h-2.500z" /><B d="M10 9h2.500v5H10z" /></>],
  ['Barras 100 %', <>{axis}<B d="M2 2.500h7v3H2z" /><G d="M9 2.500h5v3H9zM6 8.500h8v3H6z" /><B d="M2 8.500h4v3H2z" /></>],
  ['Columnas 100 %', <>{axis}<B d="M4.500 2h3v8h-3z" /><G d="M4.500 10h3v4h-3z" /><B d="M11.500 2h3v5h-3z" /><G d="M11.500 7h3v7h-3z" /></>],
  ['Líneas', <>{axis}<path d="M2 11l5-6 4 3 5-5" stroke={sky} strokeWidth="1.200" /><K d="M2 8l3-1 4 4 3-5 4 2" /></>],
  ['Áreas', <><G d="M7 14l4-12 4.500 12z" /><path d="M1 14.500L6 3l5 11.500z" fill="#fff" strokeWidth=".9" /><B d="M2 14.500L7 8l3 3 2-3 3.500 6.500z" /></>],
  ['Áreas apiladas', <>{axis}<B d="M2 8l4-4 4 3 5-4v6l-5 3-4-4-4 4z" /></>],
  ['Áreas 100 %', <>{axis}<B d="M2 2.500h13V11l-4-4-4 3-5-4z" /></>],
  ['Líneas y columnas', <>{axis}<B d="M4 3h3v11H4z" /><G d="M10.500 2h3v12h-3z" /><K d="M2 11l4-3 4 3 5-6" /></>],
  ['Líneas y columnas agrupadas', <>{axis}<B d="M4 7h3v7H4z" /><G d="M8 2h3v12H8zM12 7h2.500v7H12z" /><K d="M2 10l4-2 4 3 5-6" /></>],
  ['Cintas', <>{axis}<path d="M2 4c5 0 4 8 7 8s3-7 6-7" stroke="#e68a2e" strokeWidth="2" /><path d="M2 11c5 0 5-5 8-5l5 5v3H2z" fill={pale} stroke="#5b8fb8" /><K d="M2 2.500c5 0 5 5 7 5s3-5 6-5" /></>],
  ['Cascada', <>{axis}<path d="M4 2.500h3V14H4zM12.500 2h3v12h-3z" fill="#fff" strokeWidth=".9" /><B d="M7 2.500h3v4H7zM10 3h2.500v7H10z" /></>],
  ['Embudo', <><B d="M.5 1.500h15V5H.5zM3 5h10v4H3zM5 9h6v4.500H5z" /></>],
  ['Dispersión', <>{axis}<path d="M6 9h2v2H6zM12 2h2v2h-2zM12 10h2v2h-2z" fill={ink} stroke="none" /><path d="M4 5h2v2H4zM9 6h2v2H9z" fill="#8a8886" stroke="none" /></>],
  ['Circular', <><circle cx="8" cy="8" r="7" fill="#fff" stroke="#605e5c" /><B d="M8 1a7 7 0 0 1 4 12.500L8 8z" /></>],
  ['Anillos', <><circle cx="8" cy="8" r="5.200" stroke={pale} strokeWidth="3.600" /><circle cx="8" cy="8" r="7" stroke={sky} /><circle cx="8" cy="8" r="3.400" stroke={sky} fill="#fff" /><K d="M8 1v3.500M1 9l3.500-.5" /></>],
  ['Treemap', <><B d="M1 1.500h6v13H1z" /><path d="M1 1.500h14v13H1zM7 7.500h8M11 7.500v7M11 1.500v6M1 9h6" /></>],
  ['Mapa', <><circle cx="8" cy="6.500" r="5" stroke="#605e5c" fill="#fff" /><path d="M6 3l4 1 1 3-3 3-2-3z" fill="#3f9d63" stroke="#257a46" /><K d="M12 2c4 5 0 11-6 10M8 12v2.500M4 14.500h8" /></>],
  ['Mapa coroplético', <><B d="M1 2l4 1 3-1v6h6l-2 4-4 2-4-1-3-5z" /><G d="M8 2l3 1 4-1v5l-2 1H8z" /></>],
  ['Azure Map', <path d="M8.500 1l6.500 14-6-3-7 3z" fill="#3aa0cf" stroke="#1f7fae" strokeWidth=".6" />],
  ['Medidor', <><B d="M1 12a7 7 0 0 1 14 0h-4a3 3 0 0 0-6 0z" /><path d="M8 12l3-5" strokeWidth="1.500" /></>],
  ['Tarjeta', <><K d="M.5 2.500h15v11H.5z" w={1} /><text x="8" y="11" fontSize="7" textAnchor="middle" fill={sky} stroke="none">123</text></>],
  ['Tarjeta de varias filas', <><K d="M1 1.500h14v13H1z" /><path d="M5 5h7M5 8h5M5 11h7" stroke={sky} strokeWidth="1.500" /><K d="M3.500 4v8" w={1} /></>],
  ['KPI', <><K d="M.5 2.500h15v11H.5z" w={1} /><path d="M2.500 10L5 5l2.500 5z" stroke="#2f9e57" /><path d="M8.500 5h5L11 10z" fill="#e34b5a" stroke="#b3262e" /></>],
  ['Segmentación', <><K d="M14.500 6V1.500H1v13h7M1 4h13M3 7h2v2H3zM3 11h2v1H3zM7 6h6" /><Funnel /></>],
  ['Tabla', <K d="M1 1.500h14v13H1zM1 5h14M1 9.500h14M5.500 1.500v13M10.500 1.500v13" />],
  ['Matriz', <><path d="M5.500 9.500h9.500v5H5.500zM10.500 5H15v5h-4.500z" fill="#5aaef0" stroke="none" /><K d="M1 1.500h14v13H1zM1 5h14M1 9.500h14M5.500 1.500v13M10.500 1.500v13" /></>],
  ['Script de R', <text x="7.500" y="13" fontSize="13" fontWeight="700" textAnchor="middle" fill={sky} stroke="none">R</text>],
  ['Python', <text x="8" y="12" fontSize="12" fontWeight="700" textAnchor="middle" fill="#257db5" stroke="none">Py</text>],
  ['Influenciadores', <><K d="M1.500 1v14H16M2 4.500h9M2 8h7M2 11.500h4" /><circle cx="13" cy="3.500" r="2" fill={pale} stroke={sky} /></>],
  ['Árbol', <><K d="M5 8h5M7.500 8V3H10M7.500 8v5H10" w={1} /><B d="M.5 6h5v4h-5zM10 1h5.500v4H10zM10 6h5.500v4H10zM10 11h5.500v4H10z" /></>],
  ['Preguntas', <path d="M1 2.500h14v9H8L5 14.500v-3H1z" stroke={sky} strokeWidth="1.200" fill="#fff" />],
  ['Narrativa', <><K d="M3.500 4V1.500H11l3.500 3.500v9.500h-11V9M11 1.500V5h3.500" /><circle cx="3" cy="6.500" r="1.800" stroke={sky} /><path d="M7 8h5M6 11h6" stroke={sky} /></>],
  ['Objetivos', <><B d="M6 12h4v2.500H6z" /><K d="M4 1.500h8c0 5-1 8-4 8s-4-3-4-8zM4 3H1c0 3 1 4 3.500 4M12 3h3c0 3-1 4-3.500 4M8 9.500V12M5 14.500h6" /></>],
  ['Informe paginado', <><K d="M2 1h8l4 4v10H2z" w={1.3} /><path d="M5.500 13V9.500M8 13v-2M10.500 13V7.500" strokeWidth="1.800" /></>],
  ['Tarjeta nueva', <><K d="M7 2.500h8.500v11h-14V9" w={1} /><text x="10" y="12" fontSize="7" textAnchor="middle" fill={sky} stroke="none">123</text><Bolt /></>],
  ['Segmentación de botones', <><K d="M8 1.500h6.500V6M2 9v5h5M5 7l4 2-3 3" /><Bolt /><Funnel /></>],
  ['Segmentación de texto', <><K d="M8 1.500h6.500V6M1.500 9v5.500H8" /><path d="M5 12l4-8 3 4" stroke={sky} /><Bolt /><Funnel /></>],
  ['Segmentación de lista', <><K d="M8 1.500h6.500V6M1.500 9v5.500H8M8 5h5M4 11h3" /><Bolt /><Funnel /></>],
  ['ArcGIS', <><B d="M5 14l1-5 5-2 1-5h3v7l-4 1-1 4z" /><K d="M1 9v5.500h9M6 1.500h9.500V9" w={1} /><path d="M.5 0H5v4.500L3 8 .5 4.500zM12 10.500h3.500v4H12z" fill="#d9731a" stroke="none" /></>],
  ['Power Apps', <path d="M8 1.500l3.200 3.200L8 8 4.800 4.700zM4.300 5.200L7.500 8.500l-3.200 3.200L1 8.500zM11.700 5.200L15 8.500l-3.300 3.200-3.200-3.200zM8 9l3.200 3.200L8 15l-3.200-2.800z" stroke="#8b3a9c" />],
  ['Power Automate', <path d="M1 2.500h9l5.500 5.500-5.500 5.500H1L6.500 8zM5 2.500l5.500 5.500L5 13.500M3 11.500l3-3" stroke="#2a7fd0" />],
  ['Más opciones', <path d="M2 6.500h1.500M7 6.500h1.500M12 6.500h1.500" strokeWidth="1.500" />],
];

const tableFrame = <K d="M1 2.500h12v9.500H1zM1 5.500h12M1 9h12M5 2.500v9.500M9 2.500v9.500" />;

const TableIcon = ({ calc }) => (
  <Svg w={14}>
    {tableFrame}
    {calc && <path d="M8 6h5.500v8H8zM9 8h3.500" fill={ink} stroke="#f1f1f0" strokeWidth=".7" />}
  </Svg>
);

const MeasureIcon = () => (
  <Svg w={12}>
    <rect x="1.500" y=".7" width="9" height="10.600" rx="1.500" strokeWidth="1.200" />
    <path d="M3.500 2.800h5v1.500h-5z" strokeWidth=".8" />
    <path d="M3.300 6.500h6M3.300 8.800h6" strokeWidth="1.300" strokeDasharray="1.200 .8" />
  </Svg>
);

const SigmaIcon = () => (
  <Svg w={12}><path d="M10 2.500V1.500H2L6.500 6 2 10.500h8v-1" strokeWidth="1.200" /></Svg>
);

const Warning = () => (
  <Svg w={10} s="#c4314b">
    <path d="M5 1L9.300 9H.7zM5 3.500v3M5 7.200v1" strokeWidth=".8" />
  </Svg>
);

const fields = [
  '% hnk', '% SHARE GLO...', '%SHARE CN', '%SHARE CN (...', '35', '36', '37', '38', '39', '40',
  'CARAS CN SE...', 'CARAS HNK S...', 'CARAS MERC ...', 'CN ACT', 'Column', 'dif cn',
  'DIF HNK', 'DIF MERC', 'HNK ACT', 'MERC ACT',
];

const Bookmarks = () => (
  <Panel $w={151}>
    <PanelHead><h2>Marcadores</h2><Double /></PanelHead>
    <MarkTools>
      <IconText>
        <Svg w={12} h={14}><path d="M7 9l-1.500-1L2 12V1.500h7.500V9M9.500 9v5M7 11.500h5" /></Svg>
        Agregar
      </IconText>
      <IconText>
        <Svg w={12} h={14}><path d="M5 9l-3 3V1.500h7.500V6" /><circle cx="9" cy="9" r="2.300" /><path d="M7.500 10.500l-3 3" /></Svg>
        Vista
      </IconText>
    </MarkTools>
    <MarkList>
      <li>ECM</li>
      <li>CADENA</li>
    </MarkList>
    <MarkFoot>
      <a href="#marcadores">Más información sobre cómo crear y editar marcadores</a>
    </MarkFoot>
  </Panel>
);

const Visualizations = () => (
  <Panel $w={150}>
    <PanelHead><h2>Visualizaciones</h2><Double /></PanelHead>
    <BuildTitle>Compilar visual</BuildTitle>
    <BuildTabs>
      <BuildTab $active aria-label="Compilar visual">
        <Svg w={22}>
          <path d="M2 2.500h14" />
          <path d="M1 6h20v6H1zM1 14.500h20v6H1z" fill="#158a5c" strokeDasharray="2 1.500" />
        </Svg>
      </BuildTab>
      <BuildTab aria-label="Formato visual">
        <Svg w={22}>
          <path d="M8 19.500H2.500v-18h9l4 4.500v2M11 1.500V6h4.500" />
          <path d="M21 8l-8 7 2 2zM13 15c-3 0-2 4-5 4 3 2 7 1 7-2" strokeWidth="1.200" />
        </Svg>
      </BuildTab>
    </BuildTabs>
    <Notch>
      <Svg w={16} h={9} s="#a3a2a1"><path d="M0 8.500l1.500 0L8 2.500l6.500 6H16" /></Svg>
    </Notch>
    <VisualGrid>
      {visuals.map(([name, art]) => (
        <button key={name} aria-label={name}><Svg w={16}>{art}</Svg></button>
      ))}
    </VisualGrid>
    <ExtraVisuals>
      <Svg w={16}>
        <circle cx="8" cy="8" r="5.500" stroke="#3fb54a" strokeWidth="3.400" />
        <path d="M3 6a5.500 5.500 0 0 1 4-3.500" stroke="#c9dccb" strokeWidth="3.400" />
      </Svg>
    </ExtraVisuals>
    <Wells>
      <WellLabel $gap={3}>Valores</WellLabel>
      <Well>Agregar campos de datos a...</Well>
      <WellLabel $bold $gap={6}>Obtener detalles</WellLabel>
      <SwitchRow>
        <span>Entre varios informes</span>
        <Switch type="checkbox" />
      </SwitchRow>
      <SwitchRow $wrap>
        <span>Mantener todos los filtros</span>
        <SwitchTrack>
          <Switch type="checkbox" defaultChecked />
          <Svg w={9} s="#fff"><path d="M1 4.500L3.500 7 8 2" strokeWidth="1.500" /></Svg>
        </SwitchTrack>
      </SwitchRow>
      <Well>Agregue los campos de ob...</Well>
    </Wells>
  </Panel>
);

const DataPanel = () => (
  <Panel $w={151}>
    <PanelHead><h2>Datos</h2><Double /></PanelHead>
    <SearchField>
      <Svg w={12} s="#605e5c"><circle cx="5" cy="5" r="4" /><path d="M8 8l3.500 3.500" /></Svg>
      <input type="search" placeholder="Buscar" aria-label="Buscar" />
    </SearchField>
    <FieldArea>
      <FieldTree>
        <Cropped>
          <Branch $short><Chevron w={9} dir="right" /><TableIcon /><span>ESPACIOS</span></Branch>
        </Cropped>
        <Branch><Chevron w={9} dir="right" /><TableIcon calc /><span>MEDIDAS ESP...</span><Warning /></Branch>
        <Branch><Chevron w={9} /><TableIcon calc /><span>medidas percha</span><Warning /></Branch>
        {fields.map((name) => (
          <Field key={name}>
            <input type="checkbox" />
            {name === 'Column' ? <SigmaIcon /> : <MeasureIcon />}
            <span>{name}</span>
            {name === '% hnk' && <Warning />}
          </Field>
        ))}
      </FieldTree>
      <TreeThumb />
    </FieldArea>
  </Panel>
);

/* ---------- bottom ---------- */

const StatusBar = styled.footer`
  display: flex;
  align-items: center;
  height: 21px;
  padding: 0 15px 0 3px;
  border-top: 1px solid #dddcdb;
`;

const Zoom = styled.label`
  display: flex;
  align-items: center;
  gap: 4px;
  margin-left: auto;
  margin-right: 12px;

  input {
    appearance: none;
    width: 84px;
    height: 9px;
    background: linear-gradient(#8a8886, #8a8886) center / 100% 1px no-repeat;
  }

  input::-webkit-slider-thumb {
    appearance: none;
    width: 3px;
    height: 9px;
    background: #3b3a39;
  }
`;

const Percent = styled.span`
  margin-right: 12px;
  color: #605e5c;
`;

const Taskbar = styled.footer`
  display: flex;
  align-items: center;
  height: 39px;
  padding: 0 16px;
  background: #2b5d69;
  border-top: 1px solid #46555a;
  color: #fff;
`;

const Weather = styled.div`
  display: flex;
  align-items: center;
  gap: 3px;
  width: 261px;
  line-height: 13px;
`;

const StartButton = styled.button`
  margin-right: 11px;
`;

const TaskSearch = styled.label`
  display: flex;
  align-items: center;
  gap: 8px;
  width: 182px;
  height: 26px;
  padding-left: 8px;
  border-radius: 13px;
  background: #f4f7f8;
  color: #555;

  input {
    width: 120px;
    font-size: 11px;
  }
`;

const Apps = styled.div`
  display: flex;
  width: 515px;
  margin-left: 2px;
`;

const AppButton = styled.button`
  position: relative;
  display: flex;
  flex: 1;
  align-items: center;
  justify-content: center;
  height: 34px;
  border-radius: 4px;
  background: ${({ $active }) => ($active ? 'rgba(255, 255, 255, 0.1)' : 'none')};

  &::after {
    content: '';
    position: absolute;
    bottom: 0;
    width: ${({ $active }) => ($active ? 12 : 5)}px;
    height: 2px;
    border-radius: 1px;
    background: ${({ $active, $open }) => ($active ? '#7fd6e0' : $open ? '#a3b9bf' : 'transparent')};
  }
`;

const AppBadge = styled.span`
  position: absolute;
  top: 2px;
  right: 3px;
  width: 14px;
  height: 14px;
  border-radius: 7px;
  background: #74d3d0;
  color: #123;
  font-size: 10px;
  line-height: 14px;
`;

const Tray = styled.div`
  display: flex;
  align-items: center;
  gap: 17px;
  margin-left: auto;
`;

const TrayPair = styled.div`
  display: flex;
  gap: 6px;
`;

const Clock = styled.div`
  margin-left: -5px;
  margin-right: -12px;
  line-height: 13px;
  text-align: right;
`;

const Logo = ({ children }) => <Svg w={22} s="none">{children}</Svg>;

const apps = [
  ['Escritorios', false, <Logo><path d="M2 7h12v12H2z" fill="#77838a" /><path d="M7 3h13v13H7z" fill="#eef1f2" /><path d="M7 7h7v9H7z" fill="#b9bfc2" /></Logo>],
  ['Chrome', true, <Logo><circle cx="11" cy="11" r="10" fill="#f6c71c" /><path d="M2.300 6A10 10 0 0 1 19.700 6H11L7 13z" fill="#dd3b30" /><path d="M2.300 6A10 10 0 0 0 10 21l5-8H6z" fill="#2f9e4d" /><circle cx="11" cy="11" r="5" fill="#fff" /><circle cx="11" cy="11" r="4" fill="#3f7fe8" /></Logo>],
  ['Copilot', false, <CopilotArt w={21} hole="#2b5d69" />],
  ['Explorador', false, <Logo><path d="M1 3h7l2 2h11v4H1z" fill="#e2a11a" /><path d="M1 6h20v13H1z" fill="#fbd24b" /><path d="M5 14h12v5H5z" fill="#2a7fc0" /></Logo>],
  ['Store', false, <Logo><path d="M3 6h16v11a3 3 0 0 1-3 3H6a3 3 0 0 1-3-3z" fill="#164e8c" /><path d="M7 6V2h8v4" stroke="#4db5e6" strokeWidth="1.500" /><path d="M7 9h3.500v3.500H7z" fill="#f35325" /><path d="M11.500 9H15v3.500h-3.500z" fill="#81bc06" /><path d="M7 13.500h3.500V17H7z" fill="#05a6f0" /><path d="M11.500 13.500H15V17h-3.500z" fill="#ffba08" /></Logo>],
  ['Firefox', true, <Logo><circle cx="11" cy="11" r="9.500" fill="#f39a2b" /><path d="M11 1.500A9.500 9.500 0 0 1 20 13L11 9z" fill="#7a3fd0" /><path d="M2 13c0 12 17 10 18 0z" fill="#f7c13c" /><circle cx="11" cy="11" r="5.500" fill="#fff" /><path d="M11 8v5M9.500 9.500h3" stroke="#222" strokeWidth="1.500" /></Logo>],
  ['Disney+', false, <Logo><path d="M1 1h20v20H1z" fill="#0d3f50" /><path d="M1 14h20v7H1z" fill="#14737a" /><path d="M4 8c4-4 12-3 14 1" stroke="#8ce0e0" /><text x="11" y="14" fontSize="6" textAnchor="middle" fill="#fff">Disney+</text></Logo>],
  ['Enlace móvil', false, <Logo><path d="M2 4h11v13H2z" fill="#2784d8" /><path d="M7 7h10v12H7z" fill="#4ba9ee" /></Logo>],
  ['Netflix', false, <Logo><path d="M7 4h3v14H7zM12 4h3v14h-3z" fill="#b0101a" /><path d="M7 4h3l5 14h-3z" fill="#e01f2a" /></Logo>],
  ['AnyDesk', false, <Logo><circle cx="11" cy="11" r="9" fill="#c8402f" stroke="#e9d6d2" /><path d="M7 8.500l3.500 3.500L7 15.500M15 6.500L11.500 10l3.500 3.500" stroke="#fff" strokeWidth="1.800" /></Logo>],
  ['OBS', true, <Logo><circle cx="10" cy="12" r="9" fill="#222" stroke="#ddd" /><path d="M10 5c5 2 3 7 0 7s-6 1-5 5M16 16c-5 2-7-1-6-4" stroke="#ccc" strokeWidth="1.300" /><circle cx="17.500" cy="4.500" r="4.500" fill="#ee1111" /></Logo>],
  ['Power BI', false, <Logo><path d="M12 0h8v22h-8z" fill="#e0a526" /><path d="M7 6h8v16H7z" fill="#f2c43a" /><path d="M2 12h8v10H2z" fill="#f8dc6f" /></Logo>],
  ['TikTok', true, <Logo><rect x="1" y="1" width="20" height="20" rx="3" fill="#ee1d5b" /><path d="M12 4v10a3 3 0 1 1-3-3M12 5c1 3 2 4 5 4" stroke="#fff" strokeWidth="2.300" /></Logo>],
  ['Bloc de notas', true, <Logo><path d="M4 3h15v17H4z" fill="#6fd0e6" /><path d="M7 7h9M7 10h9M7 13h9M7 16h9" stroke="#1d5f78" strokeWidth="1.200" /><path d="M4 2h15" stroke="#e8f6fa" strokeWidth="2" strokeDasharray="2 1.200" /><path d="M4 21h15" stroke="#d9a05b" strokeWidth="1.500" /></Logo>],
];

const SystemBar = () => (
  <Taskbar>
    <Weather>
      <Svg w={23} h={26} s="none">
        <path d="M8 5c-1 5-4 7-7 7 2 4 8 5 12 1z" fill="#f0b24a" />
        <path d="M5 22a4 4 0 0 1 0-8c2-4 8-4 10 0 7 0 7 8 2 8z" fill="#d5e5f6" />
        <circle cx="17" cy="7" r="6.500" fill="#c5262c" />
        <text x="17" y="10" fontSize="9" textAnchor="middle" fill="#fff">1</text>
      </Svg>
      <div>7°C<br />Mayorm. nublado</div>
    </Weather>
    <StartButton aria-label="Inicio de Windows">
      <Svg w={20} s="none"><path d="M0 0h9.500v9.500H0zM10.500 0H20v9.500h-9.500zM0 10.500h9.500V20H0zM10.500 10.500H20V20h-9.500z" fill="#54cbf5" /></Svg>
    </StartButton>
    <TaskSearch>
      <Svg w={14} s="#222"><circle cx="6.500" cy="6" r="4.500" strokeWidth="1.500" /><path d="M10 9.500l3 3" strokeWidth="1.600" /></Svg>
      <input type="search" placeholder="Buscar" aria-label="Buscar en Windows" />
    </TaskSearch>
    <Apps>
      {apps.map(([name, open, art]) => (
        <AppButton key={name} aria-label={name} $open={open} $active={name === 'Power BI'}>
          {art}
          {name === 'Enlace móvil' && <AppBadge>6</AppBadge>}
        </AppButton>
      ))}
    </Apps>
    <Tray>
      <Chevron w={10} dir="up" s="#fff" />
      <Svg w={12} h={16} s="#9fd0d2"><rect x="4" y="1" width="4" height="8" rx="2" /><path d="M1.500 7c0 6 9 6 9 0M6 11.500V15" /></Svg>
      <span>ESP</span>
      <TrayPair>
        <Svg w={14} h={16} s="#fff"><path d="M8 2.500H1v9h10V9M3 14.500h7M5 11.500v3M9.500 1v4h4V1M11.500 5v6" /></Svg>
        <Svg w={15} h={16} s="#fff"><path d="M1 6h2.500L7 3v10L3.500 10H1zM9 6c1 1 1 3 0 4M11 4.500c2 2 2 5 0 7M13 3c3 3 3 7 0 10" /></Svg>
      </TrayPair>
      <Clock>3:25<br />6/10/2025</Clock>
      <Svg w={13} h={15} s="none"><path d="M1 12l1.500-2V6c0-5 8-5 8 0v4l1.500 2zM5 13h3v2H5z" fill="#fff" /><text x="6.500" y="10" fontSize="6" textAnchor="middle" fill="#2b5d69">z</text></Svg>
    </Tray>
  </Taskbar>
);

const App = () => (
  <Shell>
    <GlobalStyle />
    <TitleBar>
      <QuickTools>
        <Svg w={14} s="#fff"><path d="M1.500 1.500h11v11h-11zM4 1.500v4h6v-4M3.500 12.500v-5h7v5M7 9v2" /></Svg>
        <Svg w={14} s="#fff"><path d="M2 1v5h5M2 6c2-4 10-5 10 0 0 3-3 4-5 7" /></Svg>
        <Svg w={14} s="#807f7e"><path d="M12 1v5H7M12 6C10 2 2 1 2 6c0 3 2 4 5 7" /></Svg>
      </QuickTools>
      <TitleText>
        Dashboard CN • Guardado por última vez: Hoy a las 3:01 a.m.
        <Svg w={8} h={5} s="none"><path d="M0 0h8L4 4z" fill="#fff" /></Svg>
      </TitleText>
      <UserBox>
        Jonathan Alexander Ventura
        <Svg w={18} s={ink}><circle cx="9" cy="9" r="8.500" fill="#fff" stroke="none" /><circle cx="9" cy="6" r="2.600" /><path d="M4.500 10.500h9c0 5-9 5-9 0z" /></Svg>
      </UserBox>
      <WindowTools>
        <Svg w={12} s="#fff"><path d="M2 6.500h9" /></Svg>
        <Svg w={12} s="#fff"><rect x="1.500" y="3.500" width="7" height="7" rx="1" /><path d="M4 1.500h5a1.500 1.500 0 0 1 1.500 1.500v5" /></Svg>
        <Svg w={12} s="#fff"><path d="M2 2l8 8M10 2l-8 8" /></Svg>
      </WindowTools>
    </TitleBar>
    <MenuBar>
      {['Archivo', 'Inicio', 'Insertar', 'Modelado', 'Ver', 'Optimizar', 'Ayuda'].map((name) => (
        <MenuItem key={name} $active={name === 'Inicio'}>{name}</MenuItem>
      ))}
      <ShareButton>
        <Svg w={13} s="#fff"><path d="M4 4H1v8.500h9V10M4 9c0-4 2-5 4.500-5V1.500L12.500 5 8.500 8.500V6C6 6 5 7 4 9z" /></Svg>
        Compartir
        <Chevron w={9} s="#fff" />
      </ShareButton>
    </MenuBar>
    <RibbonBar />
    <Workspace>
      <Rail>
        <RailButton $active aria-label="Informe"><Svg w={14}><path d="M1.500 1v11.500H13" strokeWidth="1.300" /><path d="M4.500 5v6M7.500 7v4M10 5v6M12.500 2v9" strokeWidth="1.600" /></Svg></RailButton>
        <RailButton aria-label="Tabla"><Svg w={15} vw={14} vh={14} s="#605e5c">{tableFrame}</Svg></RailButton>
        <RailButton aria-label="Modelo"><Svg w={16} s="#605e5c"><path d="M.5 5.500h6v5h-6zM9.500.5h6v5h-6zM9.500 9.500h6v5h-6zM.5 7.500h6M9.500 2.500h6M9.500 11.500h6M3.500 5V3h6M3.500 11v2h6" /></Svg></RailButton>
        <RailButton aria-label="DAX">
          <Svg w={16} s="#605e5c"><path d="M3.500 8V1.500H9L12.500 5v5M9 1.500V5h3.500M13.500 4v9" /><text x="7" y="14" fontSize="6" fontWeight="700" textAnchor="middle" fill="#605e5c" stroke="none">DAX</text></Svg>
        </RailButton>
        <RailButton aria-label="TMDL">
          <Svg w={18} h={16} s="#605e5c"><path d="M4.500 8V1.500H10L13.500 5v4M10 1.500V5h3.500" /><text x="9" y="14" fontSize="6" fontWeight="700" textAnchor="middle" fill="#605e5c" stroke="none">TMDL</text></Svg>
        </RailButton>
      </Rail>
      <ReportArea>
        <CanvasRow>
          <Canvas><Report /></Canvas>
          <FilterStrip>
            <Double left />
            <Svg w={12}><path d="M10.500 1.500v9L6.500 7.500H1.500v-3h5z" /></Svg>
            <VerticalLabel>Filtros</VerticalLabel>
          </FilterStrip>
        </CanvasRow>
        <PageTabs>
          <ViewButton $active $left={8} aria-label="Vista de escritorio"><Svg w={16} h={13}><path d="M.5.5h15v9H.5zM8 9.500v3M5 12.500h6" /></Svg></ViewButton>
          <ViewButton $left={18} aria-label="Vista móvil"><Svg w={11} h={16}><path d="M.5.5h10v15H.5zM4.500 13h2" /></Svg></ViewButton>
          <ViewButton $left={5} aria-label="Página anterior"><Svg w={5} h={6} s="none"><path d="M4 0v6L0 3z" fill="#b5b4b3" /></Svg></ViewButton>
          <ViewButton $left={0} aria-label="Página siguiente"><Svg w={5} h={6} s="none"><path d="M1 0v6l4-3z" fill="#b5b4b3" /></Svg></ViewButton>
          <PageTab $active $w={64}>Percha</PageTab>
          <PageTab $w={71}>Espacios</PageTab>
          <AddPage aria-label="Página nueva"><Svg w={10} s="#fff"><path d="M5 1v8M1 5h8" strokeWidth="2.200" /></Svg></AddPage>
        </PageTabs>
      </ReportArea>
      <Bookmarks />
      <Visualizations />
      <DataPanel />
    </Workspace>
    <StatusBar>
      Página 1 de 2
      <Zoom>
        -
        <input type="range" min="10" max="190" defaultValue="72" aria-label="Zoom" />
        +
      </Zoom>
      <Percent>72 %</Percent>
      <Svg w={14} h={12} s="#605e5c"><path d="M.5.5h13v11H.5z" /><path d="M3 5V3h2M9 3h2v2M11 7v2H9M5 9H3V7" /></Svg>
    </StatusBar>
    <SystemBar />
  </Shell>
);

export default App;
